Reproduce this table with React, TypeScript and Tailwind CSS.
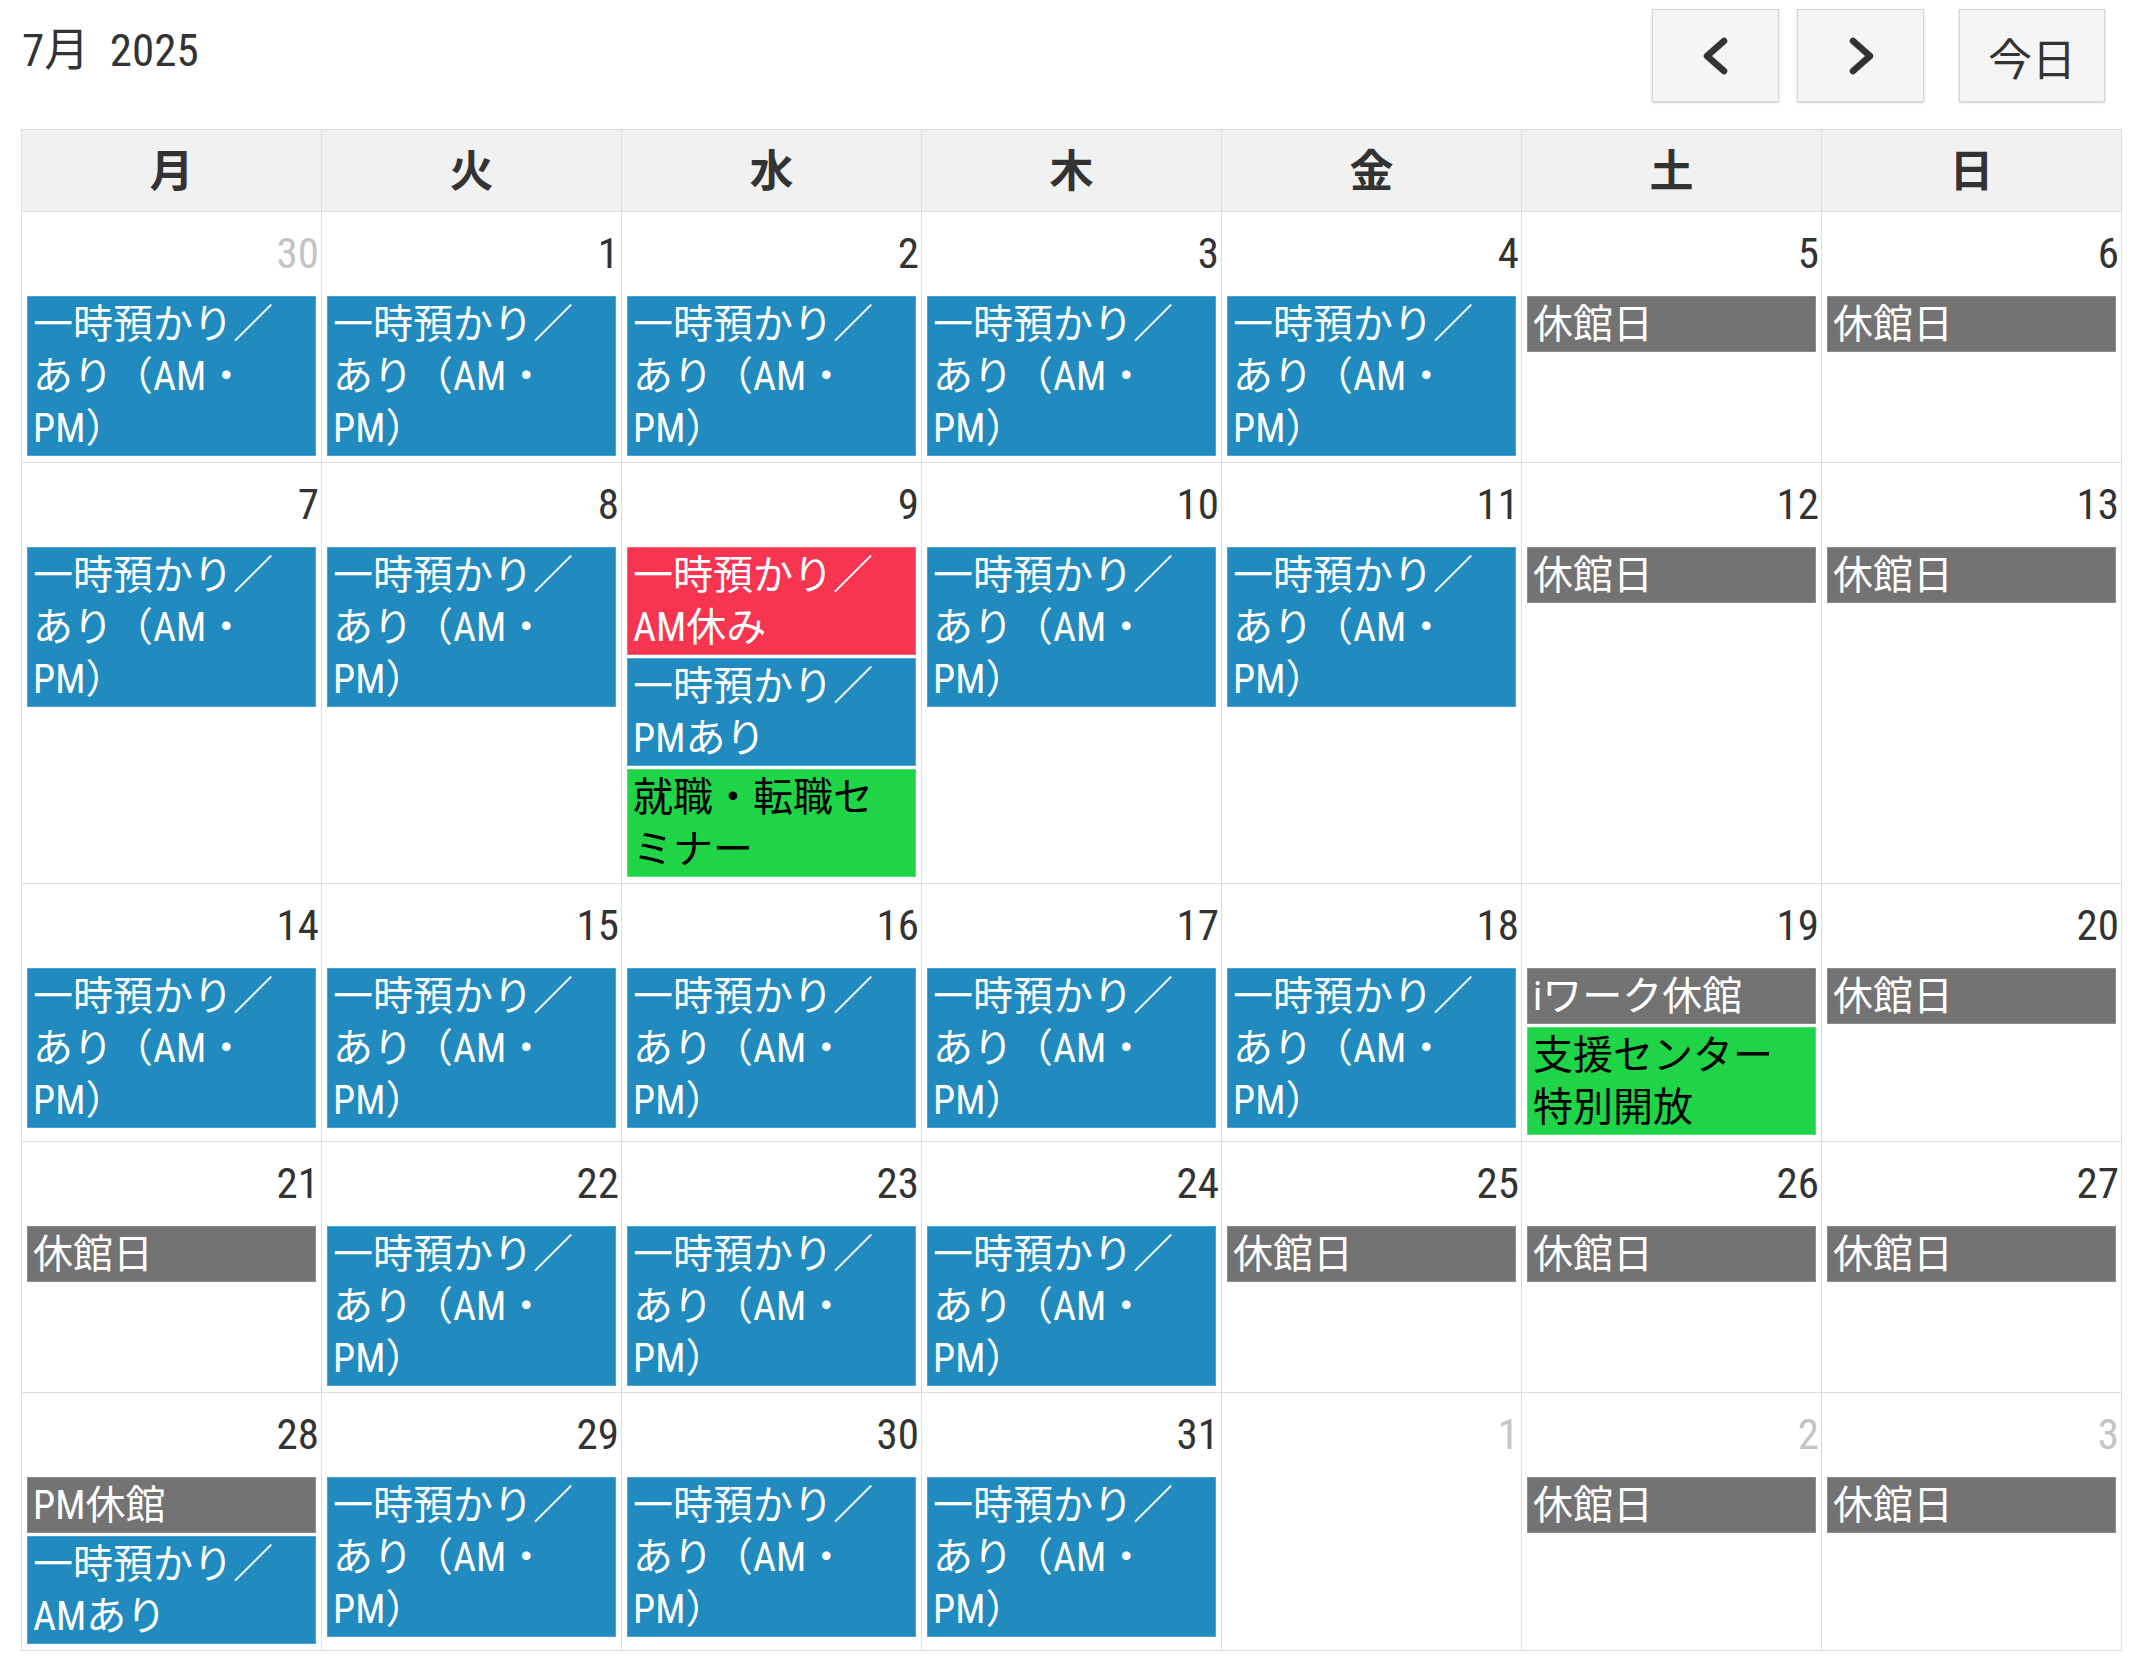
import React from 'react';

type Kind = 'blue' | 'red' | 'green' | 'grey';
type CalEvent = { title: string; kind: Kind };
type Day = { date: number; other?: boolean; events: CalEvent[] };

const FONT = "font-['Roboto','Noto_Sans_CJK_JP',sans-serif] [font-stretch:75%]";

const kindClass: Record<Kind, string> = {
  blue: 'bg-[#218bc0] border-[#4ea4d0] text-white',
  red: 'bg-[#f73550] border-[#f7667a] text-white',
  green: 'bg-[#20d448] border-[#55de72] text-black',
  grey: 'bg-[#737373] border-[#8c8c8c] text-white',
};

const open: CalEvent = { title: '一時預かり／あり（AM・PM）', kind: 'blue' };
const closed: CalEvent = { title: '休館日', kind: 'grey' };

const weeks: Day[][] = [
  [
    { date: 30, other: true, events: [open] },
    { date: 1, events: [open] },
    { date: 2, events: [open] },
    { date: 3, events: [open] },
    { date: 4, events: [open] },
    { date: 5, events: [closed] },
    { date: 6, events: [closed] },
  ],
  [
    { date: 7, events: [open] },
    { date: 8, events: [open] },
    {
      date: 9,
      events: [
        { title: '一時預かり／AM休み', kind: 'red' },
        { title: '一時預かり／PMあり', kind: 'blue' },
        { title: '就職・転職セミナー', kind: 'green' },
      ],
    },
    { date: 10, events: [open] },
    { date: 11, events: [open] },
    { date: 12, events: [closed] },
    { date: 13, events: [closed] },
  ],
  [
    { date: 14, events: [open] },
    { date: 15, events: [open] },
    { date: 16, events: [open] },
    { date: 17, events: [open] },
    { date: 18, events: [open] },
    {
      date: 19,
      events: [
        { title: 'iワーク休館', kind: 'grey' },
        { title: '支援センター特別開放', kind: 'green' },
      ],
    },
    { date: 20, events: [closed] },
  ],
  [
    { date: 21, events: [closed] },
    { date: 22, events: [open] },
    { date: 23, events: [open] },
    { date: 24, events: [open] },
    { date: 25, events: [closed] },
    { date: 26, events: [closed] },
    { date: 27, events: [closed] },
  ],
  [
    {
      date: 28,
      events: [
        { title: 'PM休館', kind: 'grey' },
        { title: '一時預かり／AMあり', kind: 'blue' },
      ],
    },
    { date: 29, events: [open] },
    { date: 30, events: [open] },
    { date: 31, events: [open] },
    { date: 1, other: true, events: [] },
    { date: 2, other: true, events: [closed] },
    { date: 3, other: true, events: [closed] },
  ],
];

const weekdays = ['月', '火', '水', '木', '金', '土', '日'];

function Chevron({ dir }: { dir: 'left' | 'right' }) {
  return (
    <svg width="30" height="38" viewBox="0 0 30 38" fill="none">
      <path
        d={dir === 'left' ? 'M23 4 L6 19 L23 34' : 'M7 4 L24 19 L7 34'}
        stroke="#333333"
        strokeWidth="6.5"
        strokeLinecap="round"
        strokeLinejoin="round"
      />
    </svg>
  );
}

function NavButton({ children, className = '' }: { children: React.ReactNode; className?: string }) {
  return (
    <button
      className={`h-[93px] flex items-center justify-center bg-[#f5f5f5] border border-[#d4d4d4] shadow-[0_1px_2px_rgba(0,0,0,0.18)] text-[#333] ${className}`}
    >
      {children}
    </button>
  );
}

function EventBox({ ev }: { ev: CalEvent }) {
  return (
    <div className={`border px-[5px] pt-[2px] pb-0 mb-[3px] text-[40px] leading-[52px] ${kindClass[ev.kind]}`}>
      {ev.title}
    </div>
  );
}

export default function App() {
  return (
    <div className={`${FONT} bg-white w-[2139px] min-h-[1662px] pl-[21px] text-[#333]`}>
      {/* Toolbar */}
      <div className="w-[2101px] h-[129px] flex items-start justify-between">
        <h2 className="mt-[25px] ml-[1px] text-[45px] leading-[52px] font-normal">7月&nbsp;&nbsp;2025</h2>
        <div className="flex items-start mt-[9px] mr-[17px]">
          <NavButton className="w-[127px]">
            <Chevron dir="left" />
          </NavButton>
          <NavButton className="w-[127px] ml-[18px]">
            <Chevron dir="right" />
          </NavButton>
          <NavButton className="w-[146px] ml-[35px] pt-[2px] text-[44px] font-['Noto_Sans_CJK_JP',sans-serif]">今日</NavButton>
        </div>
      </div>

      {/* Month grid */}
      <div className="w-[2101px] border-l border-t border-[#dddddd] grid grid-cols-7">
        {weekdays.map((w) => (
          <div
            key={w}
            className="h-[82px] pb-[6px] flex items-center justify-center bg-[#f1f1f1] border-r border-b border-[#dddddd] text-[44px] font-bold font-['Noto_Sans_CJK_JP',sans-serif] text-[#333]"
          >
            {w}
          </div>
        ))}
        {weeks.flat().map((day, i) => (
          <div key={i} className="border-r border-b border-[#dddddd] pt-[15px] pb-[3px]">
            <div
              className={`text-right pr-[2px] text-[43px] leading-[52px] ${day.other ? 'text-[#c4c4c4]' : 'text-[#333]'}`}
            >
              {day.date}
            </div>
            <div className="mt-[17px] px-[5px]">
              {day.events.map((ev, j) => (
                <EventBox key={j} ev={ev} />
              ))}
            </div>
          </div>
        ))}
      </div>
    </div>
  );
}
